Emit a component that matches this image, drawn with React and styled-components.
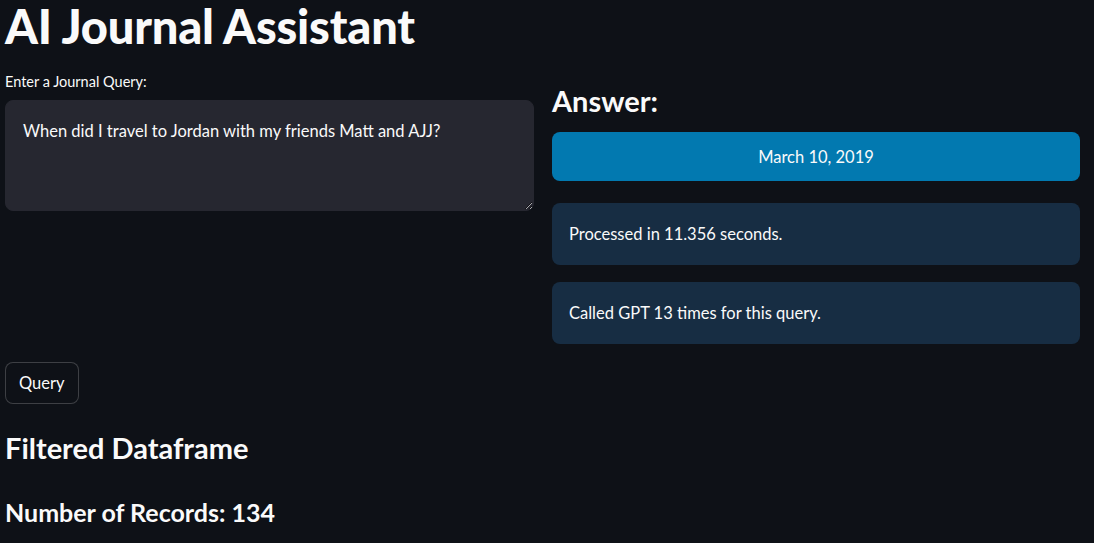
import styled, { createGlobalStyle } from 'styled-components';

const GlobalStyle = createGlobalStyle`
  html, body {
    margin: 0;
    padding: 0;
    background: #0e1117;
  }
  body {
    color: #fafafa;
    font-family: Lato, "Open Sans", sans-serif;
  }
`;

const Page = styled.main`
  width: 1094px;
  height: 543px;
  box-sizing: border-box;
  padding: 0 14px 0 5px;
  overflow: hidden;
`;

const Title = styled.h1`
  margin: 0;
  font-size: 47px;
  font-weight: 900;
  line-height: 52px;
  letter-spacing: -0.2px;
`;

const Columns = styled.div`
  display: grid;
  grid-template-columns: 529px 528px;
  column-gap: 18px;
  margin-top: 20px;
`;

const Column = styled.div`
  display: flex;
  flex-direction: column;
`;

const Label = styled.label`
  font-size: 14.5px;
  line-height: 20px;
  margin-bottom: 8px;
`;

const TextArea = styled.textarea`
  box-sizing: border-box;
  height: 111px;
  padding: 18px 17px;
  background: #262730;
  color: #fafafa;
  border: 1px solid #262730;
  border-radius: 8px;
  font: inherit;
  font-size: 16.5px;
  line-height: 24px;
  resize: vertical;
  outline: none;
`;

const Heading = styled.h2`
  margin: ${(p) => p.$mt || 0}px 0 0;
  font-size: ${(p) => p.$size || 29}px;
  font-weight: 700;
  line-height: 36px;
`;

const Answer = styled.div`
  display: flex;
  align-items: center;
  justify-content: ${(p) => (p.$primary ? 'center' : 'flex-start')};
  box-sizing: border-box;
  height: ${(p) => (p.$primary ? 49 : 62)}px;
  margin-top: ${(p) => p.$mt}px;
  padding: 0 17px;
  border-radius: 8px;
  background: ${(p) => (p.$primary ? '#0279b0' : '#172d43')};
  font-size: 16.5px;
`;

const Button = styled.button`
  margin-top: 151px;
  align-self: flex-start;
  height: 42px;
  padding: 0 13px;
  background: #0e1117;
  color: #fafafa;
  border: 1px solid rgba(250, 250, 250, 0.2);
  border-radius: 8px;
  font: inherit;
  font-size: 16.5px;
`;

export default function App() {
  return (
    <Page>
      <GlobalStyle />
      <Title>AI Journal Assistant</Title>
      <Columns>
        <Column>
          <Label>Enter a Journal Query:</Label>
          <TextArea defaultValue="When did I travel to Jordan with my friends Matt and AJJ?" />
          <Button>Query</Button>
        </Column>
        <Column>
          <Heading $mt={11}>Answer:</Heading>
          <Answer $primary $mt={13}>March 10, 2019</Answer>
          <Answer $mt={22}>Processed in 11.356 seconds.</Answer>
          <Answer $mt={17}>Called GPT 13 times for this query.</Answer>
        </Column>
      </Columns>
      <Heading $mt={26}>Filtered Dataframe</Heading>
      <Heading $mt={28} $size={25}>Number of Records: 134</Heading>
    </Page>
  );
}
